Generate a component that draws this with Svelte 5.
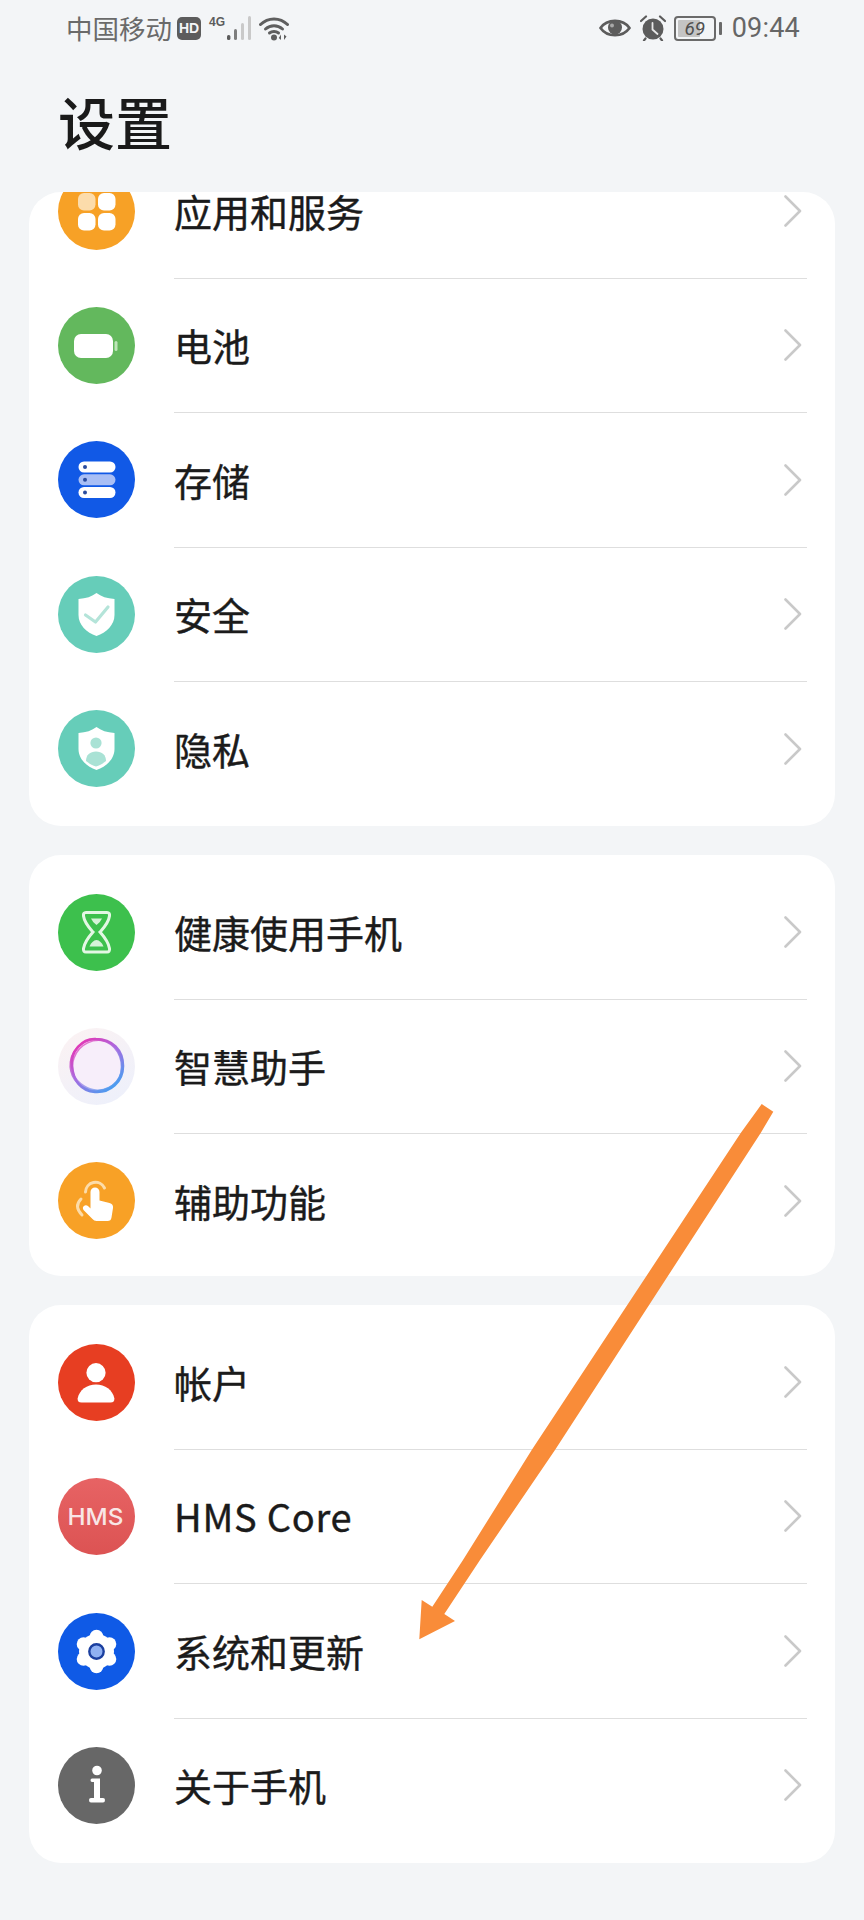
<script>
  const cards = [
    { cls: 'scrolled', rows: [
      { icon: 'apps', label: '应用和服务' },
      { icon: 'battery', label: '电池' },
      { icon: 'storage', label: '存储' },
      { icon: 'security', label: '安全' },
      { icon: 'privacy', label: '隐私' }
    ]},
    { cls: 'tight', rows: [
      { icon: 'hourglass', label: '健康使用手机' },
      { icon: 'assistant', label: '智慧助手' },
      { icon: 'touch', label: '辅助功能' }
    ]},
    { cls: '', rows: [
      { icon: 'account', label: '帐户' },
      { icon: 'hms', label: 'HMS Core', latin: true },
      { icon: 'gear', label: '系统和更新' },
      { icon: 'info', label: '关于手机' }
    ]}
  ];
  const shield = 'M38.5 17 C43 20.5 49 22.5 56.5 23 V39 C56.5 49 48.5 56.5 38.5 60 C28.5 56.5 20.5 49 20.5 39 V23 C28 22.5 34 20.5 38.5 17 Z';
</script>

{#snippet icon(kind)}
  <svg class="icon" viewBox="0 0 77 77" width="77" height="77" aria-hidden="true">
    {#if kind === 'apps'}
      <circle cx="38.5" cy="38.5" r="38.5" fill="#f7a126" />
      <rect x="20" y="20" width="17.5" height="17.5" rx="6" fill="#fcdcab" />
      <rect x="40" y="20" width="17.5" height="17.5" rx="6" fill="#fff" />
      <rect x="20" y="40" width="17.5" height="17.5" rx="6" fill="#fff" />
      <rect x="40" y="40" width="17.5" height="17.5" rx="6" fill="#fff" />
    {:else if kind === 'battery'}
      <circle cx="38.5" cy="38.5" r="38.5" fill="#63b85d" />
      <rect x="16" y="27" width="39" height="24" rx="7" fill="#fff" />
      <rect x="56.5" y="34" width="3" height="10" rx="1.5" fill="#bde5b8" />
    {:else if kind === 'storage'}
      <circle cx="38.5" cy="38.5" r="38.5" fill="#1159e6" />
      <rect x="20.5" y="20.5" width="37" height="11" rx="5.5" fill="#fff" />
      <rect x="20.5" y="33.3" width="37" height="11" rx="5.5" fill="#a9bff5" />
      <rect x="20.5" y="46" width="37" height="11" rx="5.5" fill="#fff" />
      <circle cx="27" cy="26" r="2" fill="#2a4c9f" />
      <circle cx="27" cy="38.8" r="2" fill="#2a4c9f" />
      <circle cx="27" cy="51.5" r="2" fill="#2a4c9f" />
    {:else if kind === 'security'}
      <circle cx="38.5" cy="38.5" r="38.5" fill="#66cdb9" />
      <path d={shield} fill="#fff" />
      <path d="M27.5 39 L37.5 46 L50 31" fill="none" stroke="#b4e4d9" stroke-width="3.2" stroke-linecap="round" stroke-linejoin="round" />
    {:else if kind === 'privacy'}
      <circle cx="38.5" cy="38.5" r="38.5" fill="#66cdb9" />
      <path d={shield} fill="#fff" />
      <circle cx="38" cy="33" r="5.6" fill="#a9e2d5" />
      <path d="M28 51 C28 45 32 41.5 38 41.5 C44 41.5 48 45 48 51 C45 53.5 41.5 55.5 38 56.5 C34.5 55.5 31 53.5 28 51 Z" fill="#a9e2d5" />
    {:else if kind === 'hourglass'}
      <circle cx="38.5" cy="38.5" r="38.5" fill="#3dc04d" />
      <path d="M28 18.5 H49 Q52 18.5 51.5 22 C50.5 29 46 33.5 42 38 C46 42.5 50.5 48 51.5 54.5 Q52 58 49 58 H28 Q25 58 25.5 54.5 C26.5 48 31 42.5 35 38 C31 33.5 26.5 29 25.5 22 Q25 18.5 28 18.5 Z" fill="none" stroke="#e3f7e4" stroke-width="3" />
      <path d="M33 24.5 H44 Q42 29 38.5 31 Q35 29 33 24.5 Z" fill="#d6f3d8" />
      <path d="M31.5 52.5 Q34 46.5 38.5 46 Q43 46.5 45.5 52.5 Z" fill="#d6f3d8" />
    {:else if kind === 'assistant'}
      <defs>
        <linearGradient id="halo" x1="0.2" y1="0" x2="0.8" y2="1">
          <stop offset="0" stop-color="#fbf2f3" />
          <stop offset="1" stop-color="#edf0fb" />
        </linearGradient>
        <linearGradient id="ringline" x1="0.15" y1="0.1" x2="0.8" y2="0.95">
          <stop offset="0" stop-color="#e03ab8" />
          <stop offset="0.45" stop-color="#a86be0" />
          <stop offset="1" stop-color="#4a9df0" />
        </linearGradient>
      </defs>
      <circle cx="38.5" cy="38.5" r="38.5" fill="url(#halo)" />
      <circle cx="38.5" cy="37.5" r="25" fill="#f7eefa" />
      <g fill="none" stroke="url(#ringline)">
        <path d="M14 38 C12 24 24 10 38 11 C54 11 65 22 65 38 C65 54 52 65 37 64 C23 63 15 52 14 38 Z" stroke-width="2.6" />
        <path d="M12.5 34 C14 20 29 9 43 12 C58 15 66 30 63 45 C60 58 45 66 31 62 C19 58 11 47 12.5 34 Z" stroke-width="1.8" opacity=".85" />
        <path d="M16 30 C21 16 36 9 50 14 C62 20 68 36 61 50 C54 62 38 66 26 58 C15 51 12 41 16 30 Z" stroke-width="1.6" opacity=".7" />
      </g>
    {:else if kind === 'touch'}
      <circle cx="38.5" cy="38.5" r="38.5" fill="#f8a126" />
      <path d="M27.5 30 A10 10 0 0 1 46.5 26" fill="none" stroke="#fcdca9" stroke-width="3" stroke-linecap="round" />
      <path d="M23 37 Q15.5 44.5 24 53" fill="none" stroke="#fcdca9" stroke-width="3" stroke-linecap="round" />
      <path d="M32.5 30 a4.5 4.5 0 0 1 9 0 V38.5 L51.5 41 q4 1 3.5 5 l-1.5 9.5 q-.5 3.5-4 3.5 H38.5 q-2.5 0-4-2 L25.5 48 q-1.5-2.5 .5-4 q2-1.5 4.5 .5 l2 2 Z" fill="#fff" />
    {:else if kind === 'account'}
      <circle cx="38.5" cy="38.5" r="38.5" fill="#e73e22" />
      <circle cx="38" cy="28.7" r="9.6" fill="#fff" />
      <path d="M23.5 58.5 q-4.4 0-3.8-4.2 C21.2 46 29 40.5 38 40.5 C47 40.5 54.8 46 56.3 54.3 q.6 4.2-3.8 4.2 Z" fill="#fff" />
    {:else if kind === 'hms'}
      <defs>
        <linearGradient id="hmsbg" x1="0" y1="0" x2="0" y2="1">
          <stop offset="0" stop-color="#e76364" />
          <stop offset="1" stop-color="#dc5353" />
        </linearGradient>
      </defs>
      <circle cx="38.5" cy="38.5" r="38.5" fill="url(#hmsbg)" />
      <text class="hms" x="9.5" y="47" textLength="56" lengthAdjust="spacingAndGlyphs">HMS</text>
    {:else if kind === 'gear'}
      <circle cx="38.5" cy="38.5" r="38.5" fill="#0f5ae6" />
      <g fill="#fff">
        <circle cx="38.5" cy="38.5" r="17.5" />
        {#each [90, 30, -30, -90, -150, 150] as a}
          <circle cx={38.5 + 15 * Math.cos((a * Math.PI) / 180)} cy={38.5 - 15 * Math.sin((a * Math.PI) / 180)} r="6.8" />
        {/each}
      </g>
      <circle cx="38.5" cy="38.5" r="7.2" fill="#90b1f2" stroke="#1b3f9f" stroke-width="2.4" />
    {:else if kind === 'info'}
      <circle cx="38.5" cy="38.5" r="38.5" fill="#676767" />
      <circle cx="39" cy="23.5" r="4.8" fill="#fff" />
      <path d="M34 31.5 H42 V51 H45 Q47 51 47 53 Q47 55.5 45 55.5 H33 Q31 55.5 31 53 Q31 51 33 51 H36 V35 H34 Q32.5 35 32.5 33.3 Q32.5 31.5 34 31.5 Z" fill="#fff" />
    {/if}
  </svg>
{/snippet}

<div class="page">
  <header>
    <div class="status">
      <div class="side">
        <span class="carrier">中国移动</span>
        <span class="hd">HD</span>
        <span class="net">4G</span>
        <svg class="signal" viewBox="0 0 26 25" width="26" height="25" aria-hidden="true">
          <rect x="1" y="19" width="3.4" height="5" rx="1.5" fill="#5c5c5c" />
          <rect x="8" y="13" width="3" height="11" rx="1.5" fill="#7d7d7d" />
          <rect x="15" y="7" width="3" height="17" rx="1.5" fill="#c9c9c9" />
          <rect x="22" y="0" width="3" height="24" rx="1.5" fill="#c9c9c9" />
        </svg>
        <svg class="wifi" viewBox="0 0 30 25" width="30" height="25" aria-hidden="true">
          <g fill="none" stroke="#5f5f5f" stroke-width="3" stroke-linecap="round">
            <path d="M1.5 8.5 C9 1 21 1 28.5 8.5" />
            <path d="M6.5 13 C11.5 8.5 18.5 8.5 23.5 13" />
            <path d="M10.5 17 C13 15 17 15 19.5 17" />
          </g>
          <circle cx="15" cy="21.5" r="3" fill="#5f5f5f" />
          <path d="M22 24 V18.5 L19.8 22 Z M25 18.5 V24 L27.5 20.5 Z" fill="#5f5f5f" />
        </svg>
      </div>
      <div class="side">
        <svg class="eye" viewBox="0 0 32 22" width="32" height="22" aria-hidden="true">
          <path d="M1.5 11 C8 1.5 24 1.5 30.5 11 C24 20.5 8 20.5 1.5 11 Z" fill="none" stroke="#5c5c5c" stroke-width="2.6" />
          <circle cx="16" cy="10.5" r="7" fill="#5c5c5c" />
          <circle cx="13" cy="8.5" r="2" fill="#a8a8a8" />
        </svg>
        <svg class="alarm" viewBox="0 0 26 26" width="26" height="26" aria-hidden="true">
          <circle cx="13" cy="14" r="10.5" fill="#5c5c5c" />
          <path d="M1 6 L6 1.5 M25 6 L20 1.5 M5.5 23.5 L4 25.5 M20.5 23.5 L22 25.5" stroke="#5c5c5c" stroke-width="2.2" stroke-linecap="round" />
          <path d="M12.5 8 V14.5 L17.5 19" fill="none" stroke="#e8e8e8" stroke-width="1.8" stroke-linecap="round" />
        </svg>
        <div class="battery-wrap">
          <div class="battery"><span class="charge"></span><span class="level">69</span></div>
          <span class="nub"></span>
        </div>
        <span class="time">09:44</span>
      </div>
    </div>
    <h1>设置</h1>
  </header>

  <main>
    {#each cards as card}
      <section class="card {card.cls}">
        <div class="inner">
          {#each card.rows as row, i}
            <div class="row">
              {@render icon(row.icon)}
              <div class="body" class:ruled={i < card.rows.length - 1}>
                <span class="label" class:latin={row.latin}>{row.label}</span>
                <svg class="chev" viewBox="0 0 18 32" width="18" height="32" aria-hidden="true">
                  <path d="M1.5 1.5 L16 16 L1.5 30.5" fill="none" stroke="#c9c9c9" stroke-width="2.6" stroke-linecap="round" stroke-linejoin="round" />
                </svg>
              </div>
            </div>
          {/each}
        </div>
      </section>
    {/each}
  </main>

  <svg class="arrow" viewBox="0 0 864 1920" width="864" height="1920" aria-hidden="true">
    <path d="M761.7 1104 L773.3 1111.7 L760.7 1133 L555 1450 L480 1560 L444.3 1614 L455 1621 L419.3 1639.3 L421.7 1600 L432.3 1606.7 L463 1560 L531.7 1450 L740.7 1133 Z" fill="#f98c39" />
  </svg>
</div>

<style>
  :global(body) {
    margin: 0;
    background: #f3f5f7;
  }
  .page {
    position: relative;
    width: 864px;
    height: 1920px;
    overflow: hidden;
    background: #f3f5f7;
    font-family: "Noto Sans CJK SC", "Noto Sans", sans-serif;
    color: #1b1b1b;
  }
  header {
    height: 192px;
    display: flex;
    flex-direction: column;
  }
  .status {
    height: 58px;
    padding: 0 64px 0 66px;
    margin-top: -1px;
    display: flex;
    align-items: center;
    justify-content: space-between;
    color: #666;
  }
  .side {
    display: flex;
    align-items: center;
  }
  .carrier {
    font-size: 26.5px;
    line-height: 30px;
    color: #6a6a6a;
  }
  .hd {
    margin-left: 5px;
    width: 24px;
    height: 23px;
    border-radius: 5px;
    background: #5c5c5c;
    color: #f3f5f7;
    font: 700 14px/23px "Liberation Sans", sans-serif;
    text-align: center;
  }
  .net {
    margin: -13px 0 0 8px;
    font: 700 12px/14px "Liberation Sans", sans-serif;
    color: #5c5c5c;
  }
  .signal {
    margin-left: 1px;
  }
  .wifi {
    margin-left: 7px;
  }
  .eye {
    margin-right: 9px;
  }
  .alarm {
    margin-right: 8px;
  }
  .battery-wrap {
    display: flex;
    align-items: center;
    gap: 3px;
    margin-right: 10px;
  }
  .battery {
    position: relative;
    box-sizing: border-box;
    width: 42px;
    height: 25px;
    border: 2px solid #6a6a6a;
    border-radius: 4px;
    padding: 2px;
  }
  .charge {
    display: block;
    width: 66%;
    height: 100%;
    background: #c4c4c4;
    border-radius: 1px;
  }
  .level {
    position: absolute;
    inset: 0;
    text-align: center;
    font: italic 400 19px/21px "Roboto", sans-serif;
    color: #4f4f4f;
  }
  .nub {
    width: 3px;
    height: 13px;
    background: #6a6a6a;
    border-radius: 1px;
  }
  .time {
    font: 400 27px/30px "Roboto", sans-serif;
    color: #666;
    letter-spacing: 0.2px;
  }
  h1 {
    margin: 23px 0 0 58px;
    font-size: 57px;
    line-height: 80px;
    font-weight: 500;
    color: #1a1a1a;
  }
  main {
    display: flex;
    flex-direction: column;
    gap: 29px;
    padding: 0 29px;
  }
  .card {
    background: #fff;
    border-radius: 32px;
    padding: 10px 0;
    overflow: hidden;
  }
  .card.scrolled {
    padding-top: 0;
  }
  .card.tight {
    padding-bottom: 8px;
  }
  .card.scrolled .inner {
    margin-top: -48px;
  }
  .row {
    display: flex;
    align-items: center;
    height: 134.4px;
    padding-left: 29px;
    padding-right: 28px;
  }
  .icon {
    flex: none;
    display: block;
  }
  .body {
    flex: 1;
    align-self: stretch;
    margin-left: 39px;
    display: flex;
    align-items: center;
    justify-content: space-between;
    box-sizing: border-box;
  }
  .body.ruled {
    border-bottom: 1px solid #dedede;
    margin-bottom: -0.5px;
  }
  .label {
    font-size: 38px;
    line-height: 50px;
    font-weight: 400;
    -webkit-text-stroke: 0.4px #1b1b1b;
  }
  .label.latin {
    letter-spacing: 0.75px;
  }
  .chev {
    flex: none;
    margin-right: 5px;
  }
  .hms {
    font: 500 23px "Inter", sans-serif;
    fill: #f8e6e6;
  }
  .arrow {
    position: absolute;
    top: 0;
    left: 0;
    pointer-events: none;
  }
</style>
